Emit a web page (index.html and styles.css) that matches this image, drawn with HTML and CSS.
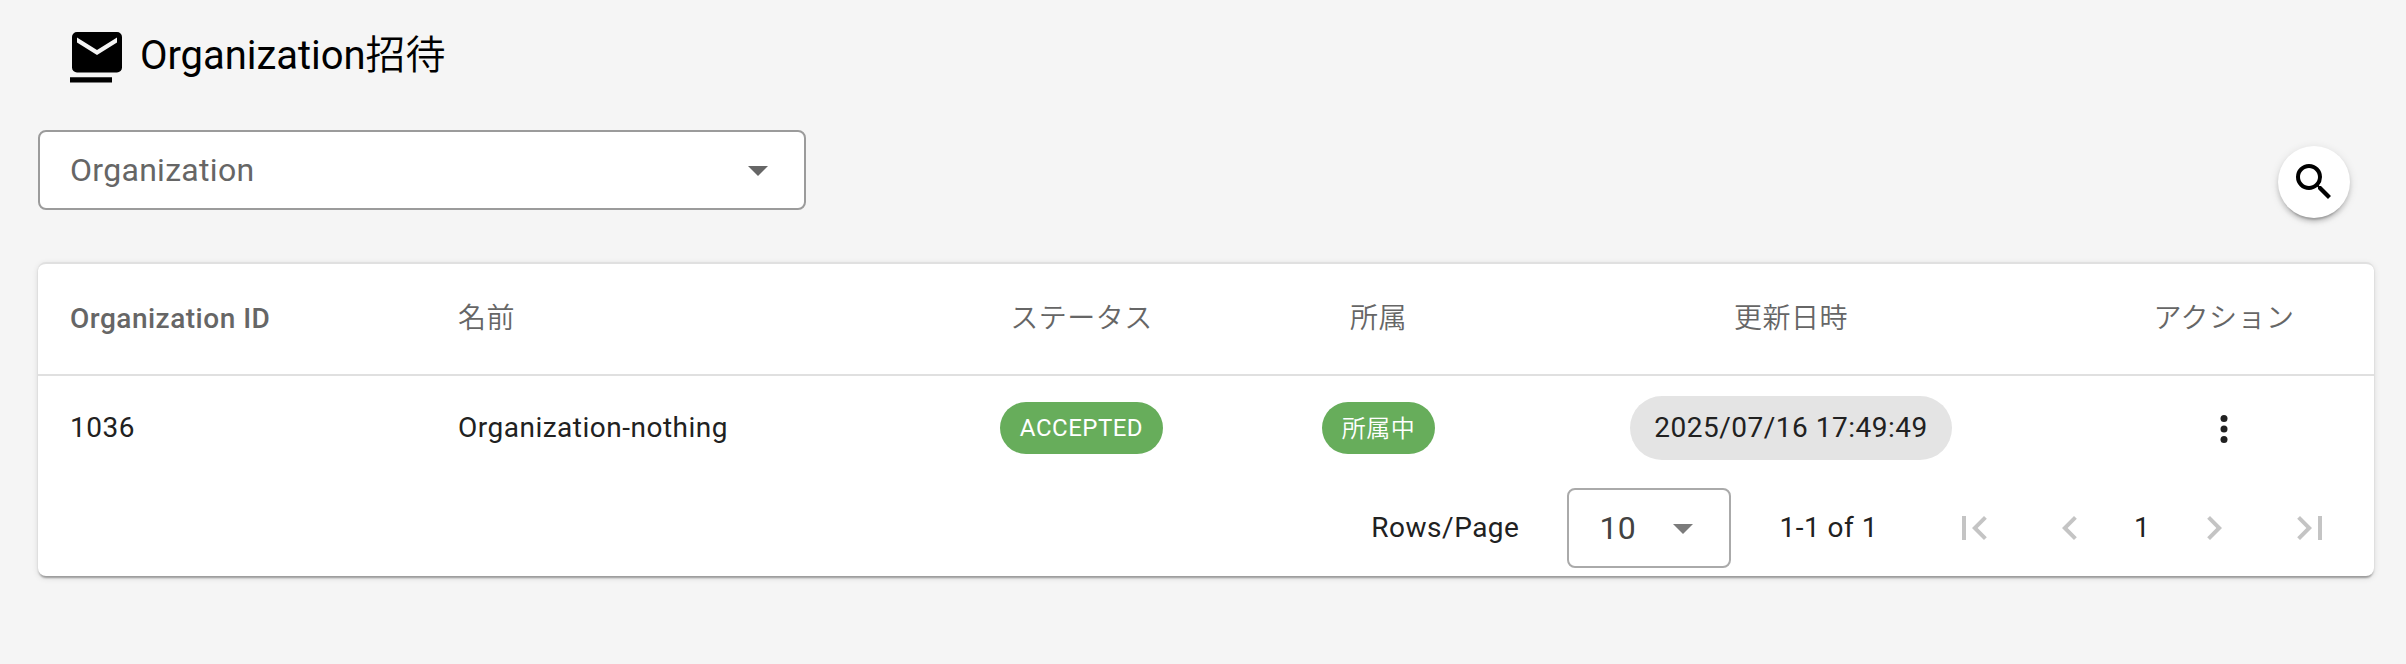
FILE: index.html
```html
<!DOCTYPE html>
<html lang="ja">
<head>
<meta charset="utf-8">
<title>Organization招待</title>
<link rel="stylesheet" href="styles.css">
</head>
<body>
<header class="page-head">
  <svg class="mail" viewBox="0 0 54 54"><path fill-rule="evenodd" d="M7 2h40a5 5 0 0 1 5 5v30.500a5 5 0 0 1-5 5H7a5 5 0 0 1-5-5V7a5 5 0 0 1 5-5zM7 7.500v5l20 12.500 20-12.500v-5L27 20z"/><path d="M0 47.300h42v5.200H0z"/></svg>
  <h1 class="title">Organization<span class="cjk">招待</span></h1>
</header>
<div class="filters">
  <div class="select select-org"><span>Organization</span><svg class="caret" viewBox="0 0 20 10"><path d="M0 0h20L10 10z"/></svg></div>
  <button class="search" aria-label="検索"><svg class="icon" viewBox="0 0 24 24"><path d="M15.500 14h-.79l-.28-.27A6.471 6.471 0 0 0 16 9.500 6.500 6.500 0 1 0 9.500 16c1.610 0 3.090-.59 4.230-1.570l.27.28v.79l5 4.990L20.490 19l-4.990-5zm-6 0C7.010 14 5 11.990 5 9.500S7.010 5 9.500 5 14 7.010 14 9.500 11.990 14 9.500 14z"/></svg></button>
</div>
<main class="card">
  <div class="row head">
    <div>Organization ID</div><div>名前</div><div class="center">ステータス</div><div class="center">所属</div><div class="center">更新日時</div><div class="center">アクション</div>
  </div>
  <div class="row body">
    <div class="text">1036</div><div class="text">Organization-nothing</div>
    <div class="center"><span class="chip chip-status">ACCEPTED</span></div>
    <div class="center"><span class="chip chip-member">所属中</span></div>
    <div class="center"><span class="chip chip-date">2025/07/16 17:49:49</span></div>
    <div class="center"><svg class="dots" viewBox="0 0 24 24"><circle cx="12" cy="6" r="2"/><circle cx="12" cy="12" r="2"/><circle cx="12" cy="18" r="2"/></svg></div>
  </div>
  <footer class="pager">
    <span class="text">Rows/Page</span>
    <div class="select select-rows"><span>10</span><svg class="caret" viewBox="0 0 20 10"><path d="M0 0h20L10 10z"/></svg></div>
    <span class="text">1-1 of 1</span>
    <nav class="pages">
      <span class="page-btn"><svg class="icon" viewBox="0 0 24 24"><path d="M18.410 16.590L13.820 12l4.590-4.590L17 6l-6 6 6 6zM6 6h2v12H6z"/></svg></span>
      <span class="page-btn"><svg class="icon" viewBox="0 0 24 24"><path d="M15.410 7.410L14 6l-6 6 6 6 1.410-1.410L10.830 12z"/></svg></span>
      <span class="page-num text">1</span>
      <span class="page-btn"><svg class="icon" viewBox="0 0 24 24"><path d="M10 6L8.590 7.410 13.170 12l-4.580 4.590L10 18l6-6z"/></svg></span>
      <span class="page-btn"><svg class="icon" viewBox="0 0 24 24"><path d="M5.590 7.410L10.180 12l-4.590 4.590L7 18l6-6-6-6zM16 6h2v12h-2z"/></svg></span>
    </nav>
  </footer>
</main>
</body>
</html>
```

FILE: styles.css
```css
* { box-sizing: border-box; }
body {
  margin: 0;
  height: 664px;
  padding: 0 32px 0 38px;
  background: #f5f5f5;
  font-family: Roboto, "Noto Sans CJK JP", sans-serif;
  font-size: 28px;
  letter-spacing: 0.5px;
  color: #212121;
}
svg { display: block; fill: currentColor; }
.page-head {
  display: flex;
  align-items: flex-start;
  gap: 16px;
  height: 130px;
  padding: 30px 0 0 32px;
  color: #000;
}
.mail { width: 54px; height: 54px; }
.title { margin: 0; font-size: 40px; font-weight: 400; line-height: 52px; letter-spacing: -0.05px; }
.cjk { font-weight: 350; }
.filters {
  display: flex;
  justify-content: space-between;
  align-items: flex-start;
  height: 132px;
  padding-right: 24px;
}
.select {
  display: flex;
  align-items: center;
  justify-content: space-between;
  height: 80px;
  border: 2px solid #9b9b9b;
  border-radius: 8px;
  background: #fff;
  font-size: 32px;
  letter-spacing: 0.3px;
}
.select-org { width: 768px; padding: 0 36px 0 30px; color: #666; }
.caret { width: 20px; height: 10px; margin-top: 2px; }
.search {
  display: flex;
  align-items: center;
  justify-content: center;
  width: 72px;
  height: 72px;
  margin-top: 16px;
  padding: 0;
  border: 0;
  border-radius: 50%;
  background: #fff;
  color: #000;
  box-shadow: 0 6px 2px -4px rgba(0,0,0,.2), 0 4px 4px rgba(0,0,0,.14), 0 2px 10px rgba(0,0,0,.12);
}
.icon { width: 48px; height: 48px; }
.card {
  height: 314px;
  border-radius: 8px;
  border-top: 2px solid #e0e0e0;
  background: #fff;
  box-shadow: 0 4px 2px -2px rgba(0,0,0,.2), 0 2px 2px rgba(0,0,0,.14), 0 2px 6px rgba(0,0,0,.12);
}
.row {
  display: grid;
  grid-template-columns: 388px 488px 335px 259px 566px 300px;
  align-items: center;
}
.row > div { padding-left: 32px; }
.row > .center { display: flex; justify-content: center; padding: 0; }
.head { height: 112px; padding-bottom: 2px; border-bottom: 2px solid #e0e0e0; font-weight: 500; color: #666; }
.head > div + div, .head > .center { padding-bottom: 4px; font-weight: 350; }
.body { height: 104px; }
.text { padding-bottom: 2px; }
.chip {
  display: flex;
  align-items: center;
  justify-content: center;
  height: 52px;
  border-radius: 32px;
  background: #67ad5b;
  color: #fff;
  font-size: 24px;
}
.chip-status { width: 163px; }
.chip-member { width: 113px; padding-bottom: 3px; font-weight: 350; }
.chip-date { width: 322px; height: 64px; padding-bottom: 1px; background: #e4e4e4; color: #212121; font-size: 28px; }
.dots { width: 42px; height: 42px; margin-top: 2px; }
.pager { display: flex; align-items: center; justify-content: flex-end; height: 96px; padding-right: 16px; }
.select-rows { width: 164px; margin: 0 48px; padding: 0 36px 0 30px; border-color: #aaa; color: #424242; }
.select-rows .caret { color: #7b7b7b; }
.pages { display: flex; align-items: center; margin-left: 48px; }
.page-btn { display: flex; justify-content: center; width: 96px; color: #c4c4c4; }
.page-num { width: 48px; text-align: center; }
```
